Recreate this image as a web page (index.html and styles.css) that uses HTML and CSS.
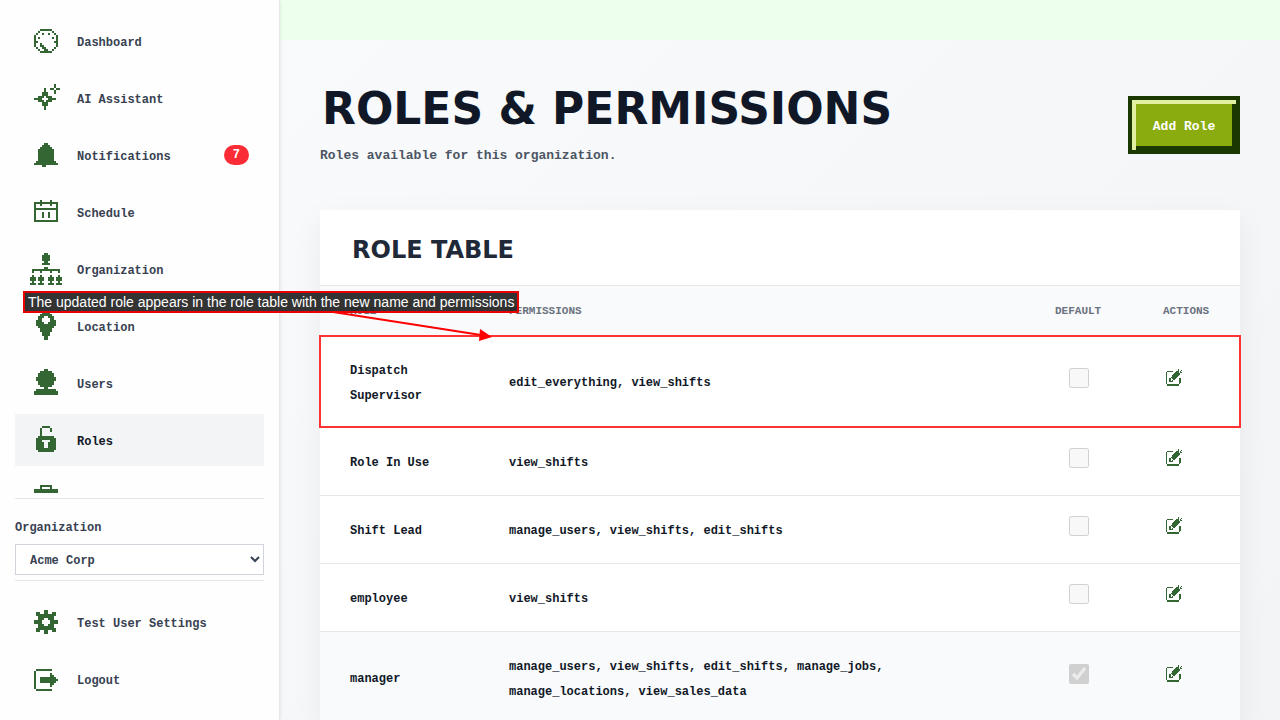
FILE: index.html
```html
<!DOCTYPE html>
<html lang="en">
<head>
    <meta charset="UTF-8">
    <meta name="viewport" content="width=device-width, initial-scale=1.0">
    <title>Roles &amp; Permissions</title>
    <link rel="stylesheet" href="styles.css">
</head>
<body>
    <svg class="sprite" aria-hidden="true">
        <symbol id="edit" viewBox="0 0 16 17">
            <path d="M12 .5h1M12 1.5h1M15 1.5h1M1 2.5h6M10 2.5h3M14 2.5h1M0 3.5h1M9 3.5h4M14 3.5h2M0 4.5h1M8 4.5h6M0 5.5h1M7 5.5h7M0 6.5h1M6 6.5h7M0 7.5h1M6 7.5h6M0 8.5h1M5 8.5h6M0 9.5h1M3 9.5h2M6 9.5h4M13 9.5h2M0 10.5h1M3 10.5h2M7 10.5h2M13 10.5h2M0 11.5h1M3 11.5h2M6 11.5h1M13 11.5h2M0 12.5h1M3 12.5h4M13 12.5h2M0 13.5h1M13 13.5h2M0 14.5h1M13 14.5h1M1 15.5h12M1 16.5h12"/>
        </symbol>
    </svg>

    <div class="layout">
        <aside class="sidebar">
            <nav class="menu">
                <a href="#" class="item">
                    <svg class="icon" viewBox="0 0 16 16"><path d="M5 2.5h6M4 3.5h1M11 3.5h1M3 4.5h1M6 4.5h1M9 4.5h1M12 4.5h1M2 5.5h1M13 5.5h1M2 6.5h1M4 6.5h1M11 6.5h1M13 6.5h1M2 7.5h1M13 7.5h1M2 8.5h2M12 8.5h2M2 9.5h1M5 9.5h1M13 9.5h1M2 10.5h1M5 10.5h2M13 10.5h1M3 11.5h1M6 11.5h2M12 11.5h1M4 12.5h1M7 12.5h2M11 12.5h1M5 13.5h6"/></svg>
                    <span class="label">Dashboard</span>
                </a>
                <a href="#" class="item">
                    <svg class="icon" viewBox="0 0 16 16"><path d="M12 1.5h1M12 2.5h1M10 3.5h2M13 3.5h2M12 4.5h1M12 5.5h1M7 3.5h1M7 4.5h1M6 5.5h3M6 6.5h3M4 7.5h3M8 7.5h3M2 8.5h4M9 8.5h4M4 9.5h3M8 9.5h3M6 10.5h3M6 11.5h3M7 12.5h1M7 13.5h1"/></svg>
                    <span class="label">AI Assistant</span>
                </a>
                <a href="#" class="item">
                    <svg class="icon" viewBox="0 0 16 16"><path d="M7 2.5h2M6 3.5h4M5 4.5h6M4 5.5h8M4 6.5h8M4 7.5h8M4 8.5h8M4 9.5h8M4 10.5h8M3 11.5h10M2 12.5h12M6 13.5h2"/></svg>
                    <span class="label">Notifications</span>
                    <span class="badge">7</span>
                </a>
                <a href="#" class="item">
                    <svg class="icon" viewBox="0 0 16 16"><path d="M5 2.5h1M10 2.5h1M2 3.5h12M2 4.5h1M5 4.5h1M10 4.5h1M13 4.5h1M2 5.5h1M13 5.5h1M2 6.5h12M2 7.5h1M13 7.5h1M2 8.5h1M6 8.5h1M9 8.5h1M13 8.5h1M2 9.5h1M6 9.5h1M9 9.5h1M13 9.5h1M2 10.5h1M6 10.5h1M9 10.5h1M13 10.5h1M2 11.5h1M13 11.5h1M2 12.5h12"/></svg>
                    <span class="label">Schedule</span>
                </a>
                <a href="#" class="item">
                    <svg class="icon" viewBox="0 0 16 16"><path d="M7 .5h2M6 1.5h4M6 2.5h4M6 3.5h4M7 4.5h2M6 5.5h4M7 7.5h2M1 8.5h14M1 9.5h1M5 9.5h1M10 9.5h1M14 9.5h1M1 11.5h1M5 11.5h1M10 11.5h1M14 11.5h1M0 12.5h3M4 12.5h3M9 12.5h3M13 12.5h3M0 13.5h3M4 13.5h3M9 13.5h3M13 13.5h3M1 14.5h1M5 14.5h1M10 14.5h1M14 14.5h1M0 15.5h3M4 15.5h3M9 15.5h3M13 15.5h3"/></svg>
                    <span class="label">Organization</span>
                </a>
                <a href="#" class="item">
                    <svg class="icon" viewBox="0 0 16 16"><path d="M6 1.5h4M5 2.5h6M4 3.5h3M9 3.5h3M4 4.5h2M10 4.5h2M3 5.5h3M10 5.5h3M3 6.5h4M9 6.5h4M3 7.5h10M4 8.5h8M5 9.5h6M5 10.5h6M6 11.5h4M6 12.5h4M7 13.5h2M7 14.5h2"/></svg>
                    <span class="label">Location</span>
                </a>
                <a href="#" class="item">
                    <svg class="icon" viewBox="0 0 16 16"><path d="M7 1.5h2M5 2.5h6M4 3.5h8M4 4.5h8M3 5.5h10M3 6.5h10M4 7.5h8M4 8.5h8M5 9.5h6M7 10.5h2M3 11.5h10M2 12.5h12M2 13.5h12"/></svg>
                    <span class="label">Users</span>
                </a>
                <a href="#" class="item active">
                    <svg class="icon" viewBox="0 0 16 16"><path d="M6 1.5h4M5 2.5h1M10 2.5h1M5 3.5h1M10 3.5h1M5 4.5h1M5 5.5h1M4 6.5h8M3 7.5h10M3 8.5h3M10 8.5h3M3 9.5h4M9 9.5h4M3 10.5h4M9 10.5h4M3 11.5h4M9 11.5h4M3 12.5h10M4 13.5h8"/></svg>
                    <span class="label">Roles</span>
                </a>
                <a href="#" class="item" aria-label="Jobs">
                    <svg class="icon" viewBox="0 0 16 16"><path d="M5 2.5h6M5 3.5h1M10 3.5h1M2 4.5h12M2 5.5h12M2 6.5h12M2 7.5h12M2 8.5h5M9 8.5h5M2 9.5h12M2 10.5h12M2 11.5h12M2 12.5h12"/></svg>
                </a>
            </nav>

            <div class="org">
                <label for="organization">Organization</label>
                <select id="organization">
                    <option>Acme Corp</option>
                </select>
            </div>

            <div class="account">
                <a href="#" class="item">
                    <svg class="icon" viewBox="0 0 16 16"><path d="M7 2.5h2M3 3.5h2M7 3.5h2M11 3.5h2M3 4.5h10M4 5.5h8M4 6.5h3M9 6.5h3M2 7.5h4M10 7.5h4M2 8.5h4M10 8.5h4M4 9.5h3M9 9.5h3M4 10.5h8M3 11.5h10M3 12.5h2M7 12.5h2M11 12.5h2M7 13.5h2"/></svg>
                    <span class="label">Test User Settings</span>
                </a>
                <a href="#" class="item">
                    <svg class="icon" viewBox="0 0 16 16"><path d="M3 3.5h8M2 4.5h1M2 5.5h1M10 5.5h1M2 6.5h1M10 6.5h2M2 7.5h1M5 7.5h8M2 8.5h1M5 8.5h9M2 9.5h1M5 9.5h8M2 10.5h1M10 10.5h2M2 11.5h1M10 11.5h1M2 12.5h1M3 13.5h8"/></svg>
                    <span class="label">Logout</span>
                </a>
            </div>
        </aside>

        <div class="page">
            <div class="banner"></div>
            <main class="content">
                <header class="page-header">
                    <div>
                        <h1>ROLES &amp; PERMISSIONS</h1>
                        <p>Roles available for this organization.</p>
                    </div>
                    <button type="button" class="add">Add Role</button>
                </header>

                <section class="card">
                    <h2>ROLE TABLE</h2>
                    <table>
                        <thead>
                            <tr>
                                <th class="col-role">ROLE</th>
                                <th>PERMISSIONS</th>
                                <th class="col-default">DEFAULT</th>
                                <th class="col-actions">ACTIONS</th>
                            </tr>
                        </thead>
                        <tbody>
                            <tr class="highlight">
                                <td>Dispatch Supervisor</td>
                                <td>edit_everything, view_shifts</td>
                                <td><input type="checkbox" aria-label="Default" disabled></td>
                                <td><a href="#" class="edit" aria-label="Edit"><svg><use href="#edit"/></svg></a></td>
                            </tr>
                            <tr>
                                <td>Role In Use</td>
                                <td>view_shifts</td>
                                <td><input type="checkbox" aria-label="Default" disabled></td>
                                <td><a href="#" class="edit" aria-label="Edit"><svg><use href="#edit"/></svg></a></td>
                            </tr>
                            <tr>
                                <td>Shift Lead</td>
                                <td>manage_users, view_shifts, edit_shifts</td>
                                <td><input type="checkbox" aria-label="Default" disabled></td>
                                <td><a href="#" class="edit" aria-label="Edit"><svg><use href="#edit"/></svg></a></td>
                            </tr>
                            <tr>
                                <td>employee</td>
                                <td>view_shifts</td>
                                <td><input type="checkbox" aria-label="Default" disabled></td>
                                <td><a href="#" class="edit" aria-label="Edit"><svg><use href="#edit"/></svg></a></td>
                            </tr>
                            <tr class="locked">
                                <td>manager</td>
                                <td>manage_users, view_shifts, edit_shifts, manage_jobs, manage_locations, view_sales_data</td>
                                <td><input type="checkbox" aria-label="Default" checked disabled></td>
                                <td><a href="#" class="edit" aria-label="Edit"><svg><use href="#edit"/></svg></a></td>
                            </tr>
                        </tbody>
                    </table>
                </section>
            </main>
        </div>
    </div>

    <div class="callout">
        <span>The updated role appears in the role table with the new name and permissions</span>
        <svg class="arrow" viewBox="0 0 160 32"><path d="M0 1L148 24" stroke="#f00" stroke-width="2"/><path d="M147 18L159 26L146 30Z" fill="#f00"/></svg>
    </div>
</body>
</html>
```
FILE: styles.css
```css
* {
    box-sizing: border-box;
}
body {
    margin: 0;
    height: 100vh;
    overflow: hidden;
    font-family: "Liberation Mono", monospace;
    font-size: 12px;
    font-weight: bold;
    color: #111827;
}
h1, h2, p {
    margin: 0;
}
a {
    color: inherit;
    text-decoration: none;
}
.sprite {
    position: absolute;
    width: 0;
    height: 0;
}
.layout {
    display: flex;
    height: 100%;
}

/* sidebar */
.sidebar {
    display: flex;
    flex-direction: column;
    flex: none;
    width: 280px;
    padding: 15px;
    background: #fefefe;
    border-right: 1px solid #e5e7eb;
    box-shadow: 0 0 4px rgba(0, 0, 0, 0.1);
    z-index: 1;
}
.menu, .account {
    display: flex;
    flex-direction: column;
    gap: 5px;
}
.menu {
    flex: 1;
    min-height: 0;
    overflow: hidden;
}
.item {
    display: flex;
    align-items: center;
    flex: none;
    gap: 15px;
    height: 52px;
    padding: 0 15px;
    color: #374151;
}
.item.active {
    background: #f3f4f6;
    color: #111827;
}
.label {
    padding-top: 4px;
}
.icon {
    width: 32px;
    height: 32px;
}
.icon path, #edit path {
    stroke: #336633;
    stroke-width: 1;
    shape-rendering: crispEdges;
}
.badge {
    margin-left: auto;
    padding: 0 9px;
    line-height: 20px;
    border-radius: 10px;
    background: #fb2c36;
    color: #fff;
}
.org {
    margin-top: 5px;
    padding: 19px 0 5px;
    border-top: 1px solid #e5e7eb;
    color: #374151;
}
.org label {
    display: block;
    line-height: 20px;
    margin-bottom: 6px;
}
.org select {
    display: block;
    width: 100%;
    height: 31px;
    padding: 2px 10px 0;
    border: 1px solid #d1d5db;
    border-radius: 0;
    background: #fff;
    color: #374151;
    font: inherit;
}
.account {
    padding-top: 15px;
    border-top: 1px solid #e5e7eb;
}

/* main area */
.page {
    flex: 1;
    min-width: 0;
    overflow: hidden;
    background: linear-gradient(135deg, #f9fafb, #f3f4f6);
}
.banner {
    height: 40px;
    background: #edffed;
}
.content {
    padding: 40px;
}
.page-header {
    display: flex;
    justify-content: space-between;
    align-items: center;
    margin-bottom: 40px;
}
h1, h2 {
    font-family: "DejaVu Sans", sans-serif;
    font-weight: bold;
}
h1 {
    padding-left: 2px;
    font-size: 44px;
    line-height: 58px;
    color: #101827;
}
.page-header p {
    margin-top: 4px;
    font-size: 13px;
    line-height: 28px;
    color: #4b5563;
}
.add {
    min-width: 112px;
    height: 58px;
    padding: 2px 16px 0;
    border: 4px solid #1a3800;
    background: #8bac0f;
    box-shadow: inset 4px 4px 0 #e0f0a0, inset -4px -4px 0 #1a3800;
    color: #fff;
    font: inherit;
    font-size: 13px;
}
.card {
    background: #fff;
    box-shadow: 0 10px 30px rgba(0, 0, 0, 0.06);
}
h2 {
    padding: 23px 32px 17px;
    font-size: 24px;
    line-height: 35px;
    color: #1f2937;
}
table {
    width: 100%;
    table-layout: fixed;
    border-collapse: collapse;
}
th {
    height: 50px;
    padding: 0 30px;
    text-align: left;
    font-size: 11px;
    color: #6b7280;
    background: #f9fafb;
    border-top: 1px solid #e5e7eb;
}
.col-role {
    width: 159px;
}
.col-default {
    width: 108px;
}
.col-actions {
    width: 107px;
}
td {
    height: 68px;
    padding: 23px 30px 18px;
    line-height: 25px;
    border-bottom: 1px solid #e5e7eb;
}
td:nth-child(2) {
    padding-right: 100px;
}
td input {
    display: block;
    width: 20px;
    height: 20px;
    margin: 0 auto 7px;
}
td:nth-child(3), td:nth-child(4) {
    padding-top: 0;
    padding-bottom: 0;
}
.edit {
    display: block;
    width: 16px;
    margin: 0 3px 8px;
}
.edit svg {
    display: block;
    width: 16px;
    height: 17px;
}
.highlight {
    outline: 2px solid #ff3333;
    outline-offset: -1px;
}
.locked {
    background: #f9fafb;
}

/* note over the page */
.callout {
    position: absolute;
    top: 291px;
    left: 23px;
    z-index: 2;
}
.callout span {
    display: block;
    padding: 0 3px;
    border: 2px solid #e60000;
    background: rgba(34, 34, 34, 0.92);
    font: 14px/18px "Liberation Sans", sans-serif;
    color: #fff;
    white-space: nowrap;
}
.arrow {
    position: absolute;
    top: 20px;
    left: 310px;
    width: 160px;
    height: 32px;
}
```
